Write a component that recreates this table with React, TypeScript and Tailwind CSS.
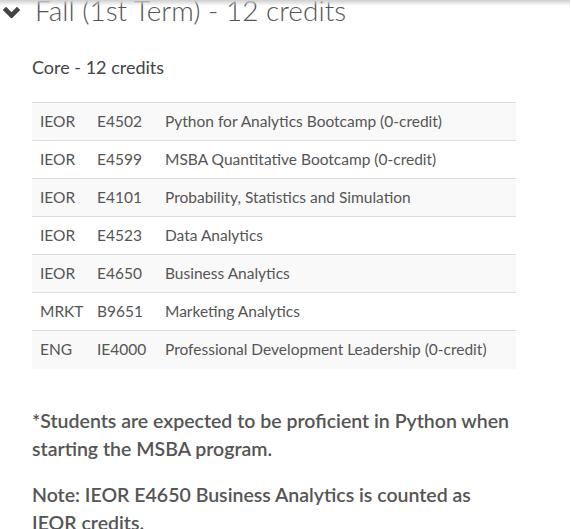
import React from 'react';

const COURSES = [
  ['IEOR', 'E4502', 'Python for Analytics Bootcamp (0-credit)'],
  ['IEOR', 'E4599', 'MSBA Quantitative Bootcamp (0-credit)'],
  ['IEOR', 'E4101', 'Probability, Statistics and Simulation'],
  ['IEOR', 'E4523', 'Data Analytics'],
  ['IEOR', 'E4650', 'Business Analytics'],
  ['MRKT', 'B9651', 'Marketing Analytics'],
  ['ENG', 'IE4000', 'Professional Development Leadership (0-credit)'],
];

const App: React.FC = () => {
  return (
    <div className="relative h-[529px] w-[572px] overflow-hidden bg-white font-['Lato',sans-serif] text-[#555]">
      {/* top edge shadow */}
      <div className="absolute left-0 top-0 h-[6px] w-[570px] bg-gradient-to-b from-[#cfcfcf] to-white/0" />

      {/* Term heading */}
      <div className="-mt-[8px] flex items-center">
        <svg viewBox="0 0 19 12" className="ml-[2px] mt-[4px] h-[12px] w-[19px]">
          <path d="M2.4 2.4 L9.5 9.5 L16.6 2.4" fill="none" stroke="#444" strokeWidth="4.6" />
        </svg>
        <h2 className="ml-[14px] text-[28px] font-light leading-[36px] text-[#555]">Fall (1st Term) - 12 credits</h2>
      </div>

      <div className="w-[548px] px-[32px]">
        <h3 className="mt-[28px] text-[18px] leading-[22px] text-[#444]">Core - 12 credits</h3>

        <table className="mt-[24px] w-[484px] border-collapse text-[15.5px] text-[#555]">
          <tbody>
            {COURSES.map(([dept, num, title], i) => (
              <tr key={num} className={`${i % 2 === 0 ? 'bg-[#f9f9f9]' : 'bg-white'} border-t border-[#ddd]`}>
                <td className="h-[38px] w-[65px] pl-[8px]">{dept}</td>
                <td className="w-[68px]">{num}</td>
                <td>{title}</td>
              </tr>
            ))}
          </tbody>
        </table>

        <p className="mt-[38px] text-[19.5px] font-semibold leading-[28px]">
          *Students are expected to be proficient in Python when starting the MSBA program.
        </p>
        <p className="mt-[18px] text-[19.5px] font-semibold leading-[28px]">
          Note: IEOR E4650 Business Analytics is counted as IEOR credits.
        </p>
      </div>
    </div>
  );
};

export default App;
